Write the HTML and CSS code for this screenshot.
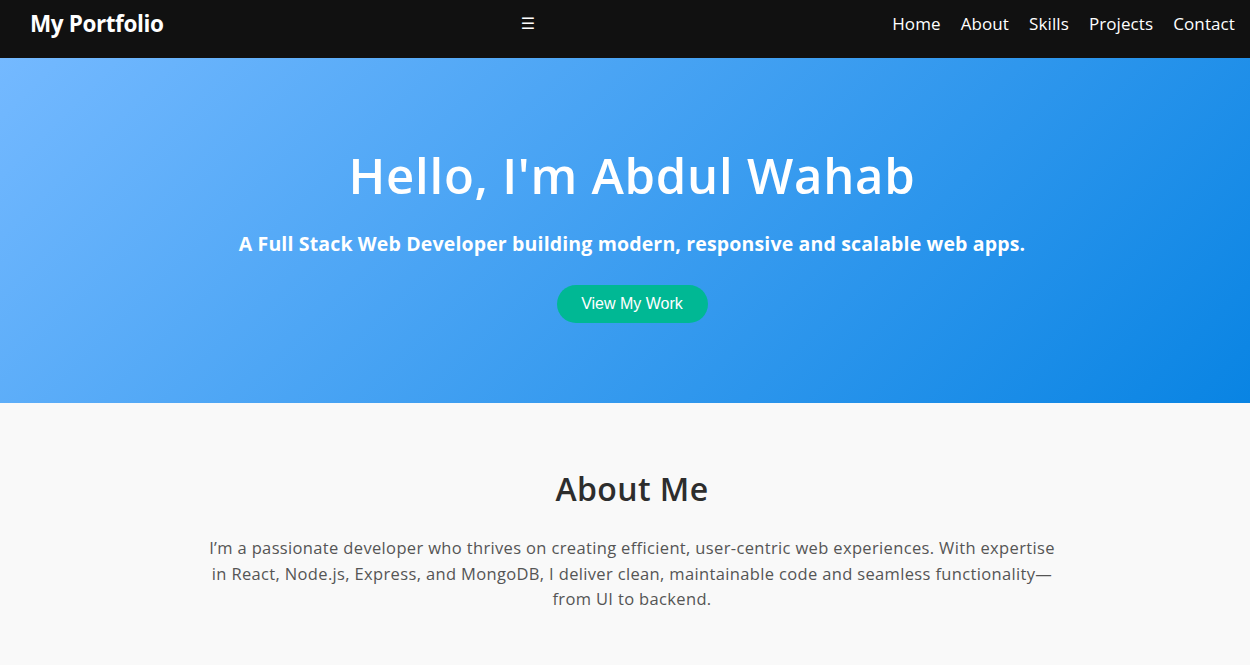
FILE: index.html
```html
<!DOCTYPE html>
<html lang="en">
<head>
<meta charset="UTF-8">
<title>My Portfolio</title>
<link rel="stylesheet" href="styles.css">
</head>
<body>
<header class="navbar">
  <div class="logo">My Portfolio</div>
  <div class="menu-toggle">&#9776;</div>
  <nav>
    <ul class="nav-links">
      <li><a href="#">Home</a></li>
      <li><a href="#">About</a></li>
      <li><a href="#">Skills</a></li>
      <li><a href="#">Projects</a></li>
      <li><a href="#">Contact</a></li>
    </ul>
  </nav>
</header>
<section class="hero">
  <h1>Hello, I'm Abdul Wahab</h1>
  <p class="subtitle">A Full Stack Web Developer building modern, responsive and scalable web apps.</p>
  <a class="btn" href="#">View My Work</a>
</section>
<section class="about">
  <h2>About Me</h2>
  <p>I’m a passionate developer who thrives on creating efficient, user-centric web experiences. With expertise in React, Node.js, Express, and MongoDB, I deliver clean, maintainable code and seamless functionality—from UI to backend.</p>
</section>
</body>
</html>
```

FILE: styles.css
```css
* { box-sizing: border-box; }
body {
  margin: 0;
  font-family: "Open Sans", "Liberation Sans", sans-serif;
  background: #f9f9f9;
  color: #333;
}
.navbar {
  height: 58px;
  background: #111;
  color: #fff;
  display: flex;
  align-items: center;
  justify-content: space-between;
  padding: 0 15px 12px 30px;
}
.logo {
  font-size: 22.5px;
  font-weight: 700;
  letter-spacing: -0.4px;
}
.menu-toggle {
  font-size: 16px;
  font-family: "DejaVu Sans", sans-serif;
}
.nav-links {
  list-style: none;
  margin: 0;
  padding: 0;
  display: flex;
  gap: 20px;
}
.nav-links a {
  color: #fff;
  text-decoration: none;
  font-size: 17px;
  letter-spacing: 0.1px;
}
.hero {
  background: linear-gradient(135deg, #74b9ff, #0984e3);
  color: #fff;
  text-align: center;
  padding: 88px 20px 80px 34px;
  display: flex;
  flex-direction: column;
  align-items: center;
}
.hero h1 {
  margin: 0;
  font-size: 49px;
  line-height: 58px;
  font-weight: 600;
  letter-spacing: 0.75px;
}
.subtitle {
  margin: 26px 0 27px;
  font-size: 19.5px;
  line-height: 28px;
  font-weight: 700;
  letter-spacing: 0.15px;
}
.btn {
  display: flex;
  align-items: center;
  justify-content: center;
  width: 151px;
  height: 38px;
  background: #00b894;
  color: #fff;
  border-radius: 19px;
  text-decoration: none;
  font-family: "Liberation Sans", Arial, sans-serif;
  font-size: 16px;
}
.about {
  padding: 66px 20px 40px 34px;
  text-align: center;
}
.about h2 {
  margin: 0;
  font-size: 32px;
  line-height: 40px;
  font-weight: 600;
  letter-spacing: 0.4px;
  color: #2d2d2d;
}
.about p {
  max-width: 846px;
  margin: 26px auto 0;
  font-size: 16.5px;
  line-height: 25.6px;
  letter-spacing: 0.35px;
  color: #555;
}
```
